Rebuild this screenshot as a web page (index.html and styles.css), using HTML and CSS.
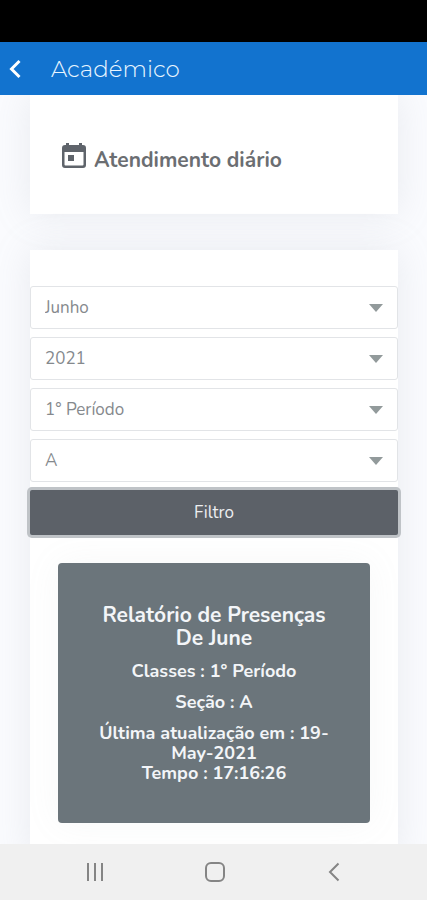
FILE: index.html
```html
<!DOCTYPE html>
<html lang="pt">
<head>
    <meta charset="UTF-8">
    <meta name="viewport" content="width=device-width, initial-scale=1.0">
    <title>Académico</title>
    <link rel="stylesheet" href="styles.css">
</head>
<body>
    <div class="status-bar"></div>
    <header class="app-header">
        <a href="#" class="back" aria-label="Voltar">
            <svg width="14" height="20" viewBox="0 0 14 20"><path d="M11.500 2L3.500 10l8 8" fill="none" stroke="#fff" stroke-width="3"/></svg>
        </a>
        <span class="app-title">Académico</span>
    </header>

    <main class="content">
        <div class="card page-title">
            <svg class="calendar" width="24" height="26" viewBox="0 0 24 26"><path fill="#5f646b" fill-rule="evenodd" d="M4 0h3v2h10V0h3v2h1a3 3 0 0 1 3 3v17a3 3 0 0 1-3 3H3a3 3 0 0 1-3-3V5a3 3 0 0 1 3-3h1zM2.500 9v12.500a1 1 0 0 0 1 1h17a1 1 0 0 0 1-1V9zM6 12h6v6H6z"/></svg>
            <h1>Atendimento diário</h1>
        </div>

        <div class="card filter-card">
            <!-- Filtro -->
            <form class="filter-form">
                <select name="month" aria-label="Mês"><option>Junho</option></select>
                <select name="year" aria-label="Ano"><option>2021</option></select>
                <select name="class" aria-label="Classe"><option>1° Período</option></select>
                <select name="section" aria-label="Seção"><option>A</option></select>
                <button type="button" class="btn-filter">Filtro</button>
            </form>

            <!-- Relatório -->
            <div class="report">
                <h2>Relatório de Presenças De June</h2>
                <p>Classes : 1° Período</p>
                <p>Seção : A</p>
                <p>Última atualização em : 19-May-2021<br>Tempo : 17:16:26</p>
            </div>
        </div>
    </main>

    <nav class="system-nav">
        <button type="button" aria-label="Recentes">
            <svg width="20" height="20" viewBox="0 0 20 20"><path d="M3 1v18M10 1v18M17 1v18" stroke="#858585" stroke-width="2"/></svg>
        </button>
        <button type="button" aria-label="Início">
            <svg width="20" height="20" viewBox="0 0 20 20"><rect x="1" y="1" width="18" height="18" rx="5" fill="none" stroke="#858585" stroke-width="2"/></svg>
        </button>
        <button type="button" aria-label="Voltar">
            <svg width="20" height="20" viewBox="0 0 20 20"><path d="M14.500 1.500L6 10l8.500 8.500" fill="none" stroke="#858585" stroke-width="2"/></svg>
        </button>
    </nav>
</body>
</html>
```
FILE: styles.css
```css
* {
    box-sizing: border-box;
}
body {
    margin: 0;
    height: 100vh;
    display: flex;
    flex-direction: column;
    font-family: Nunito, Lato, sans-serif;
    background-color: #fafbfe;
    color: #6c757d;
}
.status-bar {
    height: 42px;
    flex-shrink: 0;
    background-color: #000;
}
.app-header {
    display: flex;
    align-items: center;
    flex-shrink: 0;
    height: 53px;
    padding: 0 8px;
    background-color: #1273cf;
}
.back {
    display: flex;
    width: 43px;
}
.app-title {
    font-family: Montserrat, Inter, sans-serif;
    font-size: 23px;
    font-weight: 300;
    color: #e9f6ff;
}
.content {
    flex: 1;
    min-height: 0;
    overflow: hidden;
    padding: 0 29px 0 30px;
}
.card {
    margin-bottom: 36px;
    background-color: #fff;
    box-shadow: 0 0 35px rgba(154, 161, 171, 0.18);
}
.page-title {
    display: flex;
    align-items: center;
    gap: 8px;
    height: 119px;
    padding: 10px 32px 0;
}
.page-title h1 {
    margin: 0;
    font-size: 21px;
    line-height: 30px;
    font-weight: bold;
    color: #6b6e72;
}
.calendar {
    margin-bottom: 8px;
}
.filter-card {
    padding: 36px 0;
}
.filter-form {
    display: flex;
    flex-direction: column;
    gap: 8px;
}
select {
    width: 100%;
    height: 43px;
    padding: 0 14px;
    border: 1px solid #e2e4e7;
    border-radius: 3px;
    appearance: none;
    background: #fff url("data:image/svg+xml,%3Csvg xmlns='http://www.w3.org/2000/svg' width='14' height='8'%3E%3Cpath d='M0 0h14L7 8z' fill='%23929a9b'/%3E%3C/svg%3E") no-repeat right 14px center;
    font-family: inherit;
    font-size: 17px;
    color: #85898d;
}
.btn-filter {
    height: 45px;
    border: none;
    border-radius: 2px;
    background-color: #5c6168;
    box-shadow: 0 0 0 3px #bfc3c7;
    font-family: inherit;
    font-size: 17px;
    color: #eceef0;
}
.report {
    margin: 28px 28px 0;
    padding: 41px 40px 40px;
    border-radius: 4px;
    background-color: #6b757b;
    box-shadow: 0 0 35px rgba(154, 161, 171, 0.08);
    text-align: center;
    font-weight: bold;
    color: #f3f5f8;
}
.report h2 {
    margin: 0;
    font-size: 21px;
    line-height: 23px;
}
.report p {
    margin: 11px 0 0;
    font-size: 18px;
    line-height: 20px;
}
.system-nav {
    display: flex;
    justify-content: space-between;
    align-items: center;
    flex-shrink: 0;
    height: 56px;
    padding: 0 83px 0 85px;
    background-color: #f0f0f0;
}
.system-nav button {
    display: flex;
    padding: 0;
    border: none;
    background: none;
}
```
